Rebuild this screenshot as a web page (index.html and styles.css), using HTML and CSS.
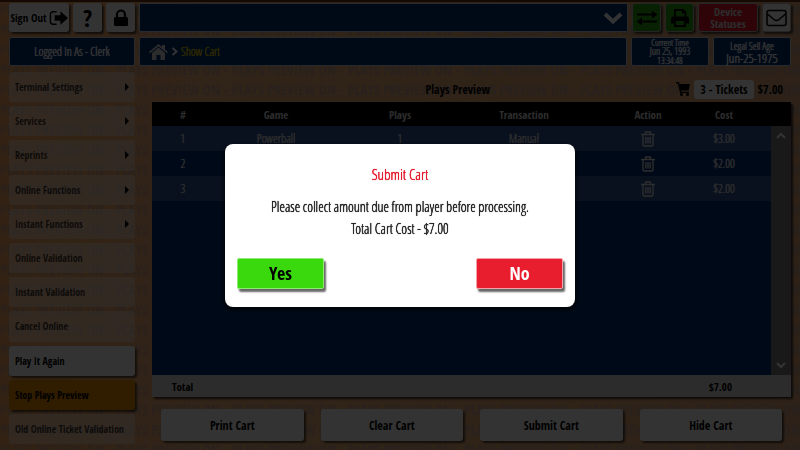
FILE: index.html
```html
<!DOCTYPE html>
<html lang="en">
<head>
<meta charset="utf-8">
<title>Show Cart</title>
<link rel="stylesheet" href="styles.css">
</head>
<body>
<svg class="watermark" aria-hidden="true">
  <defs><pattern id="banner" width="116" height="20" patternUnits="userSpaceOnUse"><text x="0" y="15">PLAYS PREVIEW ON -</text></pattern></defs>
  <rect width="100%" height="100%" fill="url(#banner)"/>
</svg>
<div class="app">
  <header class="top">
    <div class="side-tools">
      <button class="btn signout">Sign Out
        <svg width="19" height="16" viewBox="0 0 20 16" aria-hidden="true"><path d="M8 1.500H4a2.500 2.500 0 0 0-2.500 2.500v8A2.500 2.500 0 0 0 4 14.500h4" fill="none" stroke="#000" stroke-width="1.500"/><path d="M6 5h6V1l8 7-8 7v-4H6z"/></svg>
      </button>
      <button class="btn help">?</button>
      <button class="btn" aria-label="Lock"><svg width="16" height="18" viewBox="0 0 16 18" aria-hidden="true"><path d="M4 8V5.500a4 4 0 0 1 8 0V8" fill="none" stroke="#000" stroke-width="2.200"/><rect x="1" y="8" width="14" height="9" rx="1.500"/></svg></button>
    </div>
    <button class="panel dropdown" aria-label="Messages"><svg width="20" height="14" viewBox="0 0 20 14" aria-hidden="true"><path d="M2 3l8 7.500L18 3" fill="none" stroke="#fff" stroke-width="4"/></svg></button>
    <div class="status-tools">
      <button class="btn green" aria-label="Connection"><svg width="22" height="16" viewBox="0 0 22 16" aria-hidden="true"><path d="M1 3.500h15V0.500l5.500 4-5.500 4V5.500H1zM21 10.500H6V7.500l-5.500 4 5.500 4v-3h15z"/></svg></button>
      <button class="btn green" aria-label="Printer"><svg width="20" height="20" viewBox="0 0 20 20" aria-hidden="true"><path d="M5 9V2h8l2.500 2.500V9" fill="none" stroke="#000" stroke-width="1.800"/><path d="M12 1.500V5.500h4M1 15.500V11q0-2.500 2.500-2.500h13Q19 8.500 19 11v4.500h-3V13H4v2.500z"/><path d="M5 13v5h10v-5" fill="none" stroke="#000" stroke-width="1.800"/></svg></button>
      <button class="btn red">Device Statuses</button>
      <button class="btn" aria-label="Mail"><svg width="21" height="18" viewBox="0 0 21 18" aria-hidden="true"><g fill="none" stroke="#000" stroke-width="1.500"><rect x="1" y="1.500" width="19" height="15" rx="2"/><path d="M1.500 5l6.500 5.500q2.500 2 5 0L19.500 5"/></g></svg></button>
    </div>
  </header>
  <div class="info">
    <div class="panel who">Logged In As - Clerk</div>
    <nav class="panel crumbs" aria-label="Breadcrumb">
      <a href="#" aria-label="Home"><svg width="19" height="16" viewBox="0 0 19 16" aria-hidden="true"><path d="M9.500 0l3.500 3V1h3v4.500l3 2.500-1 1.200-8.500-7-8.500 7L0 8z"/><path d="M9.500 3.500L16 9v7h-4.500v-5h-4v5H3V9z"/></svg></a>
      <svg width="7" height="9" viewBox="0 0 7 9" aria-hidden="true"><path d="M1.500 1L5.500 4.500 1.500 8" fill="none" stroke="#fff" stroke-width="2"/></svg>
      <span class="here">Show Cart</span>
    </nav>
    <div class="panel time"><span>Current Time</span><span class="date">Jun 25, 1993</span><span>13:34:48</span></div>
    <div class="panel age"><span>Legal Sell Age</span><span class="big">Jun-25-1975</span></div>
  </div>
  <div class="body">
    <nav class="menu" aria-label="Main">
      <button class="item" disabled>Terminal Settings<i class="caret"></i></button>
      <button class="item" disabled>Services<i class="caret"></i></button>
      <button class="item" disabled>Reprints<i class="caret"></i></button>
      <button class="item" disabled>Online Functions<i class="caret"></i></button>
      <button class="item" disabled>Instant Functions<i class="caret"></i></button>
      <button class="item" disabled>Online Validation</button>
      <button class="item" disabled>Instant Validation</button>
      <button class="item" disabled>Cancel Online</button>
      <button class="item">Play It Again</button>
      <button class="item active">Stop Plays Preview</button>
      <button class="item" disabled>Old Online Ticket Validation</button>
    </nav>
    <main class="main">
      <div class="heading">
        <h1>Plays Preview</h1>
        <div class="summary">
          <svg width="14" height="14" viewBox="0 0 14 14" aria-hidden="true"><path d="M0 0h3l.5 2H14l-1.500 6.500H5l.3 1.300H13V11H4L2 1.500H0z"/><circle cx="5.500" cy="12.500" r="1.500"/><circle cx="11.500" cy="12.500" r="1.500"/></svg>
          <span class="tickets">3 - Tickets</span><span>$7.00</span>
        </div>
      </div>
      <div class="grid">
        <table>
          <thead><tr><th class="c-num">#</th><th>Game</th><th>Plays</th><th>Transaction</th><th>Action</th><th class="c-cost">Cost</th><th class="c-end"></th></tr></thead>
          <tbody>
            <tr><td>1</td><td>Powerball</td><td>1</td><td>Manual</td><td><button class="trash" aria-label="Delete play 1"><svg width="14" height="16" viewBox="0 0 14 16"><use href="#bin"/></svg></button></td><td>$3.00</td><td></td></tr>
            <tr><td>2</td><td></td><td></td><td></td><td><button class="trash" aria-label="Delete play 2"><svg width="14" height="16" viewBox="0 0 14 16"><use href="#bin"/></svg></button></td><td>$2.00</td><td></td></tr>
            <tr><td>3</td><td></td><td></td><td></td><td><button class="trash" aria-label="Delete play 3"><svg width="14" height="16" viewBox="0 0 14 16"><use href="#bin"/></svg></button></td><td>$2.00</td><td></td></tr>
          </tbody>
        </table>
        <div class="scroll">
          <button aria-label="Scroll up"><svg width="10" height="7" viewBox="0 0 10 7"><path d="M1 6l4-4 4 4" fill="none" stroke="#fff" stroke-width="2"/></svg></button>
          <button aria-label="Scroll down"><svg width="10" height="7" viewBox="0 0 10 7"><path d="M1 1l4 4 4-4" fill="none" stroke="#fff" stroke-width="2"/></svg></button>
        </div>
        <div class="total"><span>Total</span><span>$7.00</span></div>
      </div>
      <div class="actions">
        <button class="btn">Print Cart</button>
        <button class="btn">Clear Cart</button>
        <button class="btn">Submit Cart</button>
        <button class="btn">Hide Cart</button>
      </div>
    </main>
  </div>
</div>
<svg width="0" height="0" class="defs" aria-hidden="true"><symbol id="bin" viewBox="0 0 14 16"><g fill="none" stroke="#e0e0e0" stroke-width="1.400"><path d="M0 3.500h14M4.500 3V1h5v2M2 4v9.500q0 1.500 1.500 1.500h7q1.500 0 1.500-1.500V4M4.800 6v6.500M7 6v6.500M9.200 6v6.500"/></g></symbol></svg>
<div class="overlay">
  <dialog open class="dialog" aria-labelledby="dlg-title">
    <h2 id="dlg-title">Submit Cart</h2>
    <p>Please collect amount due from player before processing.<br>Total Cart Cost - $7.00</p>
    <div class="choices">
      <button class="yes">Yes</button>
      <button class="no">No</button>
    </div>
  </dialog>
</div>
</body>
</html>
```
FILE: styles.css
```css
* { box-sizing: border-box; }
:root {
  --bold: "Open Sans Condensed", "Liberation Sans Narrow", "Roboto Condensed", "Liberation Sans", sans-serif;
  --light: "Open Sans Condensed Light", "Roboto Condensed", "Liberation Sans Narrow", "Liberation Sans", sans-serif;
}
body {
  margin: 0;
  min-height: 100vh;
  overflow: hidden;
  background: linear-gradient(90deg, #fcab60, #f2b27a 25%, #e6ab78);
  font-family: var(--light);
  font-size: 12px;
  color: #000;
}
button, h1, th { font-family: var(--bold); font-weight: bold; }
button { font-size: inherit; color: inherit; border: 0; padding: 0; }
svg { flex: none; }
.defs { position: absolute; }
.watermark { position: absolute; inset: 0; width: 100%; height: 100%; }
.watermark text { font: bold 14px var(--bold); fill: #8a90c0; fill-opacity: .35; }
.app {
  position: relative;
  z-index: 0;
  height: 100vh;
  display: flex;
  flex-direction: column;
  border-top: 2px solid #6b3210;
}
.top, .info { display: grid; grid-template-columns: 126px 1fr 159px; column-gap: 4px; padding: 1px 9px 5px; }
.info { grid-template-columns: 126px 1fr 78px 78px; padding-top: 0; padding-bottom: 4px; }
.side-tools { display: flex; gap: 4px; }
.status-tools { display: flex; gap: 4px; }
.btn {
  display: flex;
  align-items: center;
  justify-content: center;
  gap: 2px;
  height: 29px;
  flex: 1;
  background: #fff;
  border-radius: 3px;
  box-shadow: 2px 2px 2px rgba(0, 0, 0, .6);
}
.signout { flex: 0 0 60px; font-size: 11px; white-space: nowrap; }
.help { font-size: 24px; }
.status-tools .btn { flex: 0 0 29px; font-size: 11px; border: 1px solid #bbb; }
.status-tools .green { background: #28a50b; }
.status-tools .red { flex: 1; background: #e3172c; color: #ddd; line-height: 12px; }
.panel {
  background: #013276;
  border: 1px solid #c8d2e1;
  border-radius: 2px;
  color: #fff;
  height: 29px;
  display: flex;
  align-items: center;
  justify-content: center;
}
.panel, td, .dialog h2, .dialog p { text-shadow: 0 0 0 currentColor, 0 0 1px currentColor; }
.dropdown { justify-content: flex-end; padding-right: 4px; }
.who { font-size: 12px; }
.crumbs { justify-content: flex-start; gap: 3px; padding-left: 9px; }
.crumbs svg { display: block; fill: #ddd; }
.here { color: #ddc800; }
.time, .age { flex-direction: column; line-height: 9px; font-size: 9px; }
.time .date { font-size: 10px; }
.age { line-height: 12px; font-size: 10px; }
.age .big { font-size: 13px; }
.body { flex: 1; min-height: 0; display: flex; padding: 2px 9px 6px; gap: 17px; }
.menu { width: 126px; display: flex; flex-direction: column; gap: 4px; }
.item {
  flex: 1;
  min-height: 0;
  display: flex;
  align-items: center;
  justify-content: space-between;
  padding: 0 6px;
  font-size: 10px;
  white-space: nowrap;
  text-align: left;
  background: #fff;
  border-radius: 3px;
  box-shadow: 2px 2px 2px rgba(0, 0, 0, .6);
}
.item:disabled { background: rgba(255, 255, 255, .4); color: rgba(0, 0, 0, .75); box-shadow: none; }
.item.active { background: #f09000; }
.caret { border: 4px solid transparent; border-left-color: #000; border-right: 0; }
.main { flex: 1; min-width: 0; display: flex; flex-direction: column; }
.heading { display: grid; grid-template-columns: 10fr auto 11fr; align-items: center; height: 30px; padding-top: 4px; }
h1 { grid-column: 2; margin: 0; font-size: 12px; }
.summary { display: flex; justify-content: flex-end; align-items: center; gap: 4px; font-family: var(--bold); font-weight: bold; font-size: 12px; padding-right: 8px; }
.tickets { background: #fff; border-radius: 3px; padding: 1px 6px; }
.grid {
  flex: 1;
  min-height: 0;
  display: grid;
  grid-template: 24px 1fr 22px / 1fr 20px;
  background: #003078;
  box-shadow: 2px 2px 2px rgba(0, 0, 0, .7);
}
table { grid-area: 1 / 1 / 3 / 3; align-self: start; width: 100%; border-collapse: collapse; table-layout: fixed; color: #ddd; text-align: center; font-size: 12px; }
th, td { padding: 0; height: 25px; }
th { height: 24px; background: #000; font-size: 11px; }
tbody tr:nth-child(odd) { background: #2f5599; }
.c-num { width: 62px; }
.c-cost { width: 28px; }
.c-end { width: 53px; }
.trash { background: none; vertical-align: middle; }
.trash svg { display: block; }
.scroll { grid-area: 2 / 2; z-index: 1; background: #7d7d7d; display: flex; flex-direction: column; justify-content: space-between; align-items: center; padding: 6px 0; }
.scroll button { background: none; }
.scroll svg { display: block; }
.total { grid-column: 1 / 3; background: #ddd; display: flex; justify-content: space-between; align-items: center; padding: 0 59px 0 20px; font-family: var(--bold); font-weight: bold; font-size: 11px; }
.actions { display: grid; grid-template-columns: repeat(4, 1fr); gap: 17px; padding: 12px 9px 3px; }
.actions .btn { height: 32px; font-size: 12px; }
.overlay {
  position: fixed;
  inset: 0;
  z-index: 1;
  display: flex;
  align-items: center;
  justify-content: center;
  background: rgba(0, 0, 0, .8);
}
.dialog {
  position: static;
  margin: 0;
  width: 350px;
  border: 0;
  border-radius: 8px;
  padding: 20px 12px 18px;
  background: #fff;
  color: #222;
  text-align: center;
  box-shadow: 0 2px 5px #000;
}
.dialog h2 { margin: 0 0 12px; font-size: 15px; line-height: 20px; font-weight: normal; color: #e3172c; }
.dialog p { margin: 0; font-size: 14px; line-height: 22px; }
.choices { display: flex; justify-content: space-between; margin-top: 18px; }
.choices button { width: 87px; height: 31px; font-size: 18px; border-radius: 2px; box-shadow: 2px 3px 2px rgba(0, 0, 0, .6); }
.yes { background: #3ad90e; color: #000; border: 1px solid #8bea70; }
.no { background: #e81e2f; color: #fff; border: 1px solid #f5a0a8; }
```
